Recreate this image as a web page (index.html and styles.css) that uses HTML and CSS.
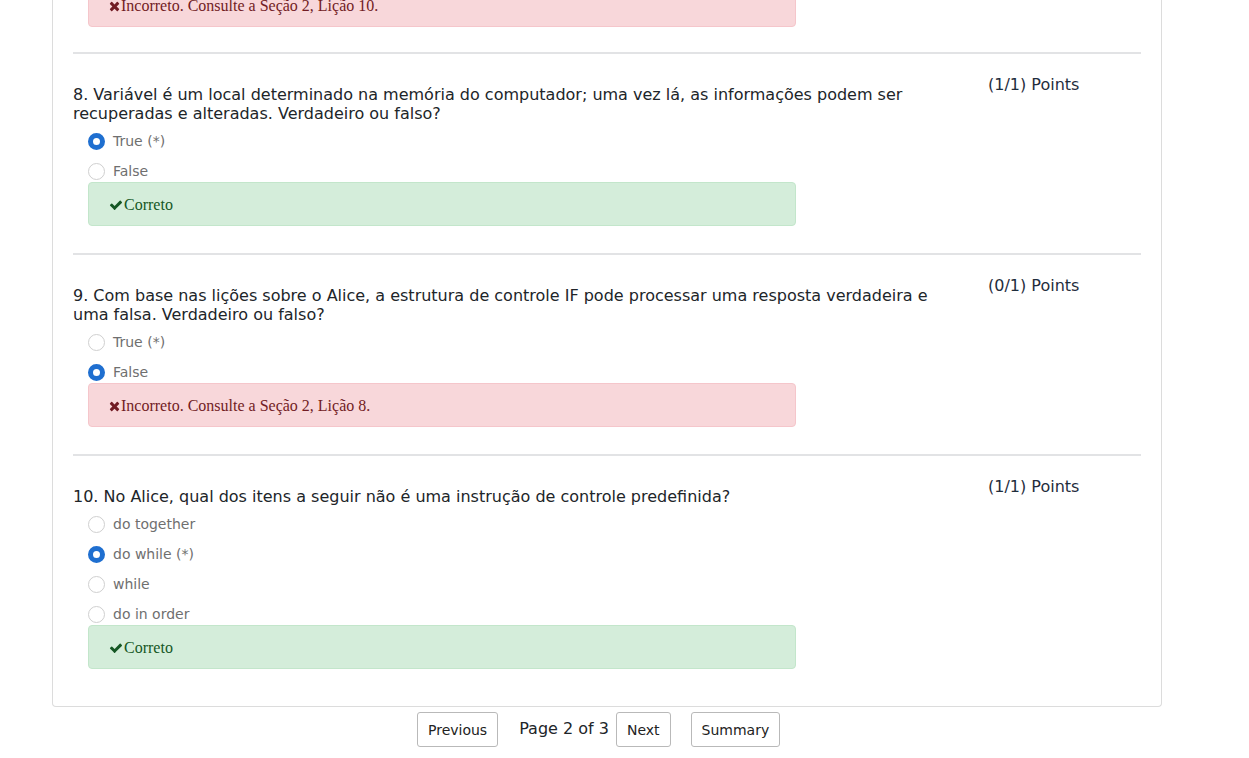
FILE: index.html
```html
<!DOCTYPE html>
<html lang="pt">
<head>
<meta charset="utf-8">
<title>Quiz</title>
<link rel="stylesheet" href="styles.css">
</head>
<body>
<div class="card">
  <div class="fb fb-bad fb-top"><svg class="ico-x" viewBox="0 0 1408 1792"><path d="M1298 1322q0 40-28 68l-136 136q-28 28-68 28t-68-28l-294-294-294 294q-28 28-68 28t-68-28l-136-136q-28-28-28-68t28-68l294-294-294-294q-28-28-28-68t28-68l136-136q28-28 68-28t68 28l294 294 294-294q28-28 68-28t68 28l136 136q28 28 28 68t-28 68l-294 294 294 294q28 28 28 68z"/></svg>Incorreto. Consulte a Seção 2, Lição 10.</div>

  <div class="q">
    <div class="q-row">
      <div class="q-main">
        <div class="q-text">8. Variável é um local determinado na memória do computador; uma vez lá, as informações podem ser recuperadas e alteradas. Verdadeiro ou falso?</div>
        <div class="opts">
          <div class="opt"><span class="radio on"></span>True (*)</div>
          <div class="opt"><span class="radio"></span>False</div>
        </div>
        <div class="fb fb-ok"><svg class="ico-c" viewBox="0 0 1792 1792"><path d="M1671 566q0 40-28 68l-724 724-136 136q-28 28-68 28t-68-28l-136-136-362-362q-28-28-28-68t28-68l136-136q28-28 68-28t68 28l294 295 656-657q28-28 68-28t68 28l136 136q28 28 28 68z"/></svg>Correto</div>
      </div>
      <div class="pts">(1/1) Points</div>
    </div>
  </div>

  <div class="q">
    <div class="q-row">
      <div class="q-main">
        <div class="q-text">9. Com base nas lições sobre o Alice, a estrutura de controle IF pode processar uma resposta verdadeira e uma falsa. Verdadeiro ou falso?</div>
        <div class="opts">
          <div class="opt"><span class="radio"></span>True (*)</div>
          <div class="opt"><span class="radio on"></span>False</div>
        </div>
        <div class="fb fb-bad"><svg class="ico-x" viewBox="0 0 1408 1792"><path d="M1298 1322q0 40-28 68l-136 136q-28 28-68 28t-68-28l-294-294-294 294q-28 28-68 28t-68-28l-136-136q-28-28-28-68t28-68l294-294-294-294q-28-28-28-68t28-68l136-136q28-28 68-28t68 28l294 294 294-294q28-28 68-28t68 28l136 136q28 28 28 68t-28 68l-294 294 294 294q28 28 28 68z"/></svg>Incorreto. Consulte a Seção 2, Lição 8.</div>
      </div>
      <div class="pts">(0/1) Points</div>
    </div>
  </div>

  <div class="q">
    <div class="q-row">
      <div class="q-main">
        <div class="q-text">10. No Alice, qual dos itens a seguir não é uma instrução de controle predefinida?</div>
        <div class="opts">
          <div class="opt"><span class="radio"></span>do together</div>
          <div class="opt"><span class="radio on"></span>do while (*)</div>
          <div class="opt"><span class="radio"></span>while</div>
          <div class="opt"><span class="radio"></span>do in order</div>
        </div>
        <div class="fb fb-ok"><svg class="ico-c" viewBox="0 0 1792 1792"><path d="M1671 566q0 40-28 68l-724 724-136 136q-28 28-68 28t-68-28l-136-136-362-362q-28-28-28-68t28-68l136-136q28-28 68-28t68 28l294 295 656-657q28-28 68-28t68 28l136 136q28 28 28 68z"/></svg>Correto</div>
      </div>
      <div class="pts">(1/1) Points</div>
    </div>
  </div>
</div>

<div class="pager">
  <button class="btn">Previous</button>
  <span class="page">Page 2 of 3</span>
  <button class="btn">Next</button>
  <button class="btn btn-sum">Summary</button>
</div>
</body>
</html>
```
FILE: styles.css
```css
html, body {
  margin: 0;
  padding: 0;
  background: #fff;
}
body {
  font-family: "DejaVu Sans", Verdana, sans-serif;
  color: #212529;
  overflow: hidden;
  height: 758px;
}
.card {
  width: 1068px;
  margin: -17px 0 0 52px;
  padding: 0 20px 37px 20px;
  border: 1px solid #dcdcdc;
  border-top: 0;
  border-radius: 0 0 4px 4px;
}
.fb {
  margin-left: 15px;
  width: 686px;
  height: 40px;
  padding-top: 2px;
  border: 1px solid;
  border-radius: 4px;
  display: flex;
  align-items: center;
  padding-left: 20px;
  font-family: "Liberation Serif", "Times New Roman", serif;
  font-size: 16px;
}
.fb-top {
  margin-bottom: 25px;
}
.fb-ok {
  background: #d4edda;
  border-color: #c3e6cb;
  color: #155724;
  margin-top: -4px;
}
.fb-bad {
  background: #f8d7da;
  border-color: #f5c6cb;
  color: #721c24;
}
.q .fb-bad { margin-top: -4px; }
.ico-c, .ico-x {
  fill: currentColor;
  flex: none;
}
.ico-c {
  width: 14px;
  height: 14px;
  margin: 0 1px 1px 0;
}
.ico-x {
  width: 11px;
  height: 14px;
  margin: 0 1px 1px 0;
}
.q {
  border-top: 2px solid #e2e3e5;
  padding-bottom: 27px;
}
.q:last-child { padding-bottom: 0; }
.q-row {
  display: flex;
}
.q-main {
  width: 890px;
  padding-top: 31px;
}
.q-text {
  font-size: 16px;
  line-height: 19px;
}
.opts {
  margin-top: 7px;
}
.opt {
  display: flex;
  align-items: center;
  height: 30px;
  margin-left: 15px;
  font-size: 14px;
  color: #6f6f6f;
  margin-top: -4px;
}
.opt + .opt { margin-top: 0; }
.radio {
  width: 15px;
  height: 15px;
  border: 1px solid #cfcfcf;
  border-radius: 50%;
  margin-right: 8px;
  background: #fff;
  flex: none;
}
.radio.on {
  width: 7px;
  height: 7px;
  border: 5px solid #1f6fd0;
}
.pts {
  margin-left: 25px;
  padding-top: 21px;
  font-size: 16px;
  color: #1f2d3d;
  white-space: nowrap;
}
.pager {
  display: flex;
  align-items: center;
  margin: 5px 0 0 417px;
}
.btn {
  font-family: "DejaVu Sans", Verdana, sans-serif;
  font-size: 14px;
  color: #222;
  background: #fff;
  border: 1px solid #b9b9b9;
  border-radius: 3px;
  height: 35px;
  padding: 0 10px;
}
.page {
  font-size: 16px;
  margin: -3px 7px 0 21px;
}
.btn-sum { margin-left: 20px; }
```
